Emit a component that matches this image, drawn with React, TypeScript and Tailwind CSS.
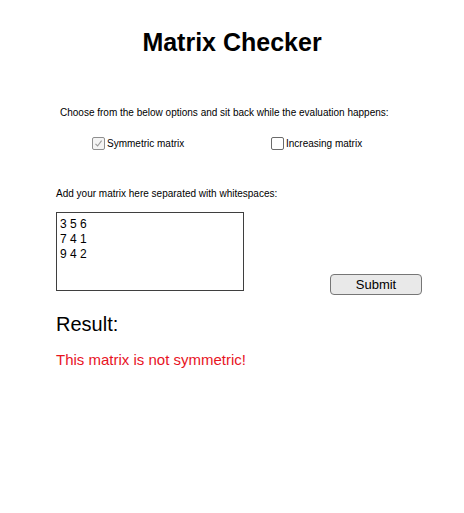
function CheckBox({ checked }: { checked?: boolean }) {
  return (
    <span
      className={
        "flex h-[13px] w-[13px] items-center justify-center rounded-[2px] border " +
        (checked ? "border-[#8f8f8f] bg-[#f4f4f4]" : "border-[#6b6b6b] bg-white")
      }
    >
      {checked && (
        <svg width="9" height="9" viewBox="0 0 9 9" fill="none">
          <path d="M1.5 4.8 L3.6 7 L7.6 1.6" stroke="#9a9a9a" strokeWidth="1.1" />
        </svg>
      )}
    </span>
  );
}

export default function App() {
  return (
    <div
      className="min-h-[513px] w-[464px] bg-white text-black"
      style={{ fontFamily: '"Liberation Sans", Arial, sans-serif' }}
    >
      {/* Title */}
      <h1 className="pt-[27px] text-center text-[25px] font-bold leading-[30px]">
        Matrix Checker
      </h1>

      {/* Options */}
      <p className="mt-[50px] pl-[60px] text-[10px] leading-[12px]">
        Choose from the below options and sit back while the evaluation happens:
      </p>
      <div className="mt-[18px] flex pl-[92px] text-[10px] leading-[13px]">
        <label className="flex w-[179px] items-center gap-[2px]">
          <CheckBox checked />
          <span>Symmetric matrix</span>
        </label>
        <label className="flex items-center gap-[2px]">
          <CheckBox />
          <span>Increasing matrix</span>
        </label>
      </div>

      {/* Matrix input */}
      <p className="mt-[38px] pl-[56px] text-[10px] leading-[12px]">
        Add your matrix here separated with whitespaces:
      </p>
      <div className="mt-[12px] flex items-start pl-[56px]">
        <div className="h-[79px] w-[188px] border border-[#3f3f3f] px-[3px] pt-[4px] text-[12px] leading-[15px]">
          <div>3 5 6</div>
          <div>7 4 1</div>
          <div>9 4 2</div>
        </div>
        <button className="ml-[86px] mt-[62px] h-[21px] w-[92px] rounded-[4px] border border-[#767676] bg-[#e9e9e9] text-[13px] leading-[15px]">
          Submit
        </button>
      </div>

      {/* Result */}
      <h2 className="mt-[17px] pl-[56px] text-[20px] leading-[24px]">Result:</h2>
      <p className="mt-[15px] pl-[56px] text-[15px] leading-[18px] text-[#e8141f]">
        This matrix is not symmetric!
      </p>
    </div>
  );
}
